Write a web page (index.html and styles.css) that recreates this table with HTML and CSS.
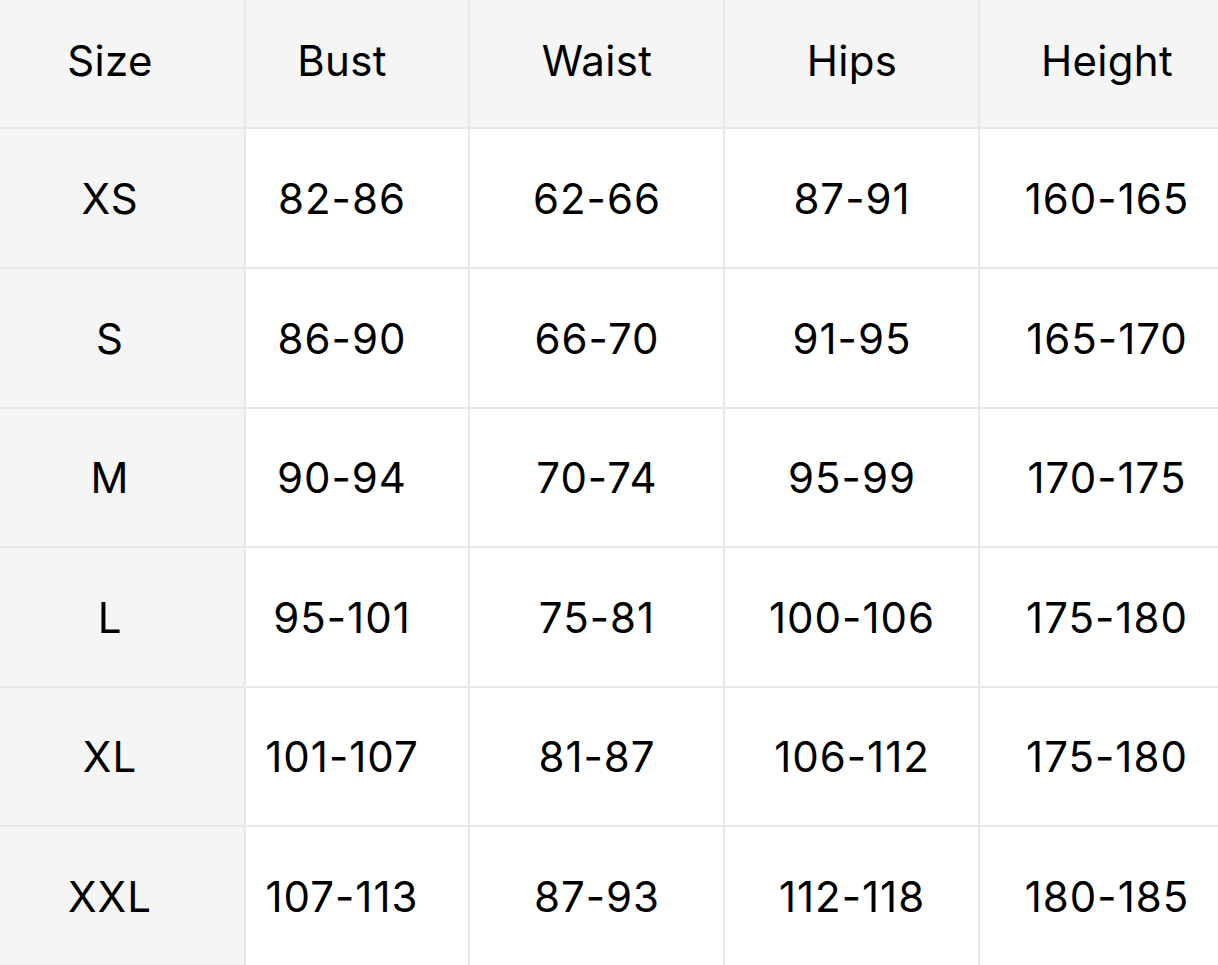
FILE: index.html
```html
<!DOCTYPE html>
<html>
<head>
<meta charset="utf-8">
<link rel="stylesheet" href="styles.css">
</head>
<body>
<div class="chart">
  <div class="cell head c1">Size</div>
  <div class="cell head c2">Bust</div>
  <div class="cell head c3">Waist</div>
  <div class="cell head c4">Hips</div>
  <div class="cell head c5">Height</div>

  <div class="cell size c1">XS</div>
  <div class="cell c2">82-86</div>
  <div class="cell c3">62-66</div>
  <div class="cell c4">87-91</div>
  <div class="cell c5">160-165</div>

  <div class="cell size c1">S</div>
  <div class="cell c2">86-90</div>
  <div class="cell c3">66-70</div>
  <div class="cell c4">91-95</div>
  <div class="cell c5">165-170</div>

  <div class="cell size c1">M</div>
  <div class="cell c2">90-94</div>
  <div class="cell c3">70-74</div>
  <div class="cell c4">95-99</div>
  <div class="cell c5">170-175</div>

  <div class="cell size c1">L</div>
  <div class="cell c2">95-101</div>
  <div class="cell c3">75-81</div>
  <div class="cell c4">100-106</div>
  <div class="cell c5">175-180</div>

  <div class="cell size c1">XL</div>
  <div class="cell c2">101-107</div>
  <div class="cell c3">81-87</div>
  <div class="cell c4">106-112</div>
  <div class="cell c5">175-180</div>

  <div class="cell size c1">XXL</div>
  <div class="cell c2">107-113</div>
  <div class="cell c3">87-93</div>
  <div class="cell c4">112-118</div>
  <div class="cell c5">180-185</div>
</div>
</body>
</html>
```
FILE: styles.css
```css
html, body {
  margin: 0;
  padding: 0;
  background: #ffffff;
}
.chart {
  display: grid;
  grid-template-columns: 244px 222px 253px 253px 238px;
  grid-template-rows: 127px 138px 138px 137px 138px 137px 138px;
  gap: 2px;
  background: #e8e8e8;
  width: 1218px;
  height: 965px;
  font-family: Inter, "Liberation Sans", Arial, sans-serif;
  font-size: 42px;
  letter-spacing: 1px;
  color: #000;
}
.cell {
  background: #ffffff;
  display: flex;
  align-items: center;
  justify-content: center;
  white-space: nowrap;
}
.head {
  background: #f5f5f5;
  padding-bottom: 6px;
  box-sizing: border-box;
  letter-spacing: 0.3px;
}
.size {
  background: #f5f5f5;
}
.c1 { padding-right: 24px; }
.c2 { padding-right: 30px; }
.c3 { padding-left: 1px; }
.c4 { padding-left: 1px; }
.c5 { padding-left: 16px; }
```
